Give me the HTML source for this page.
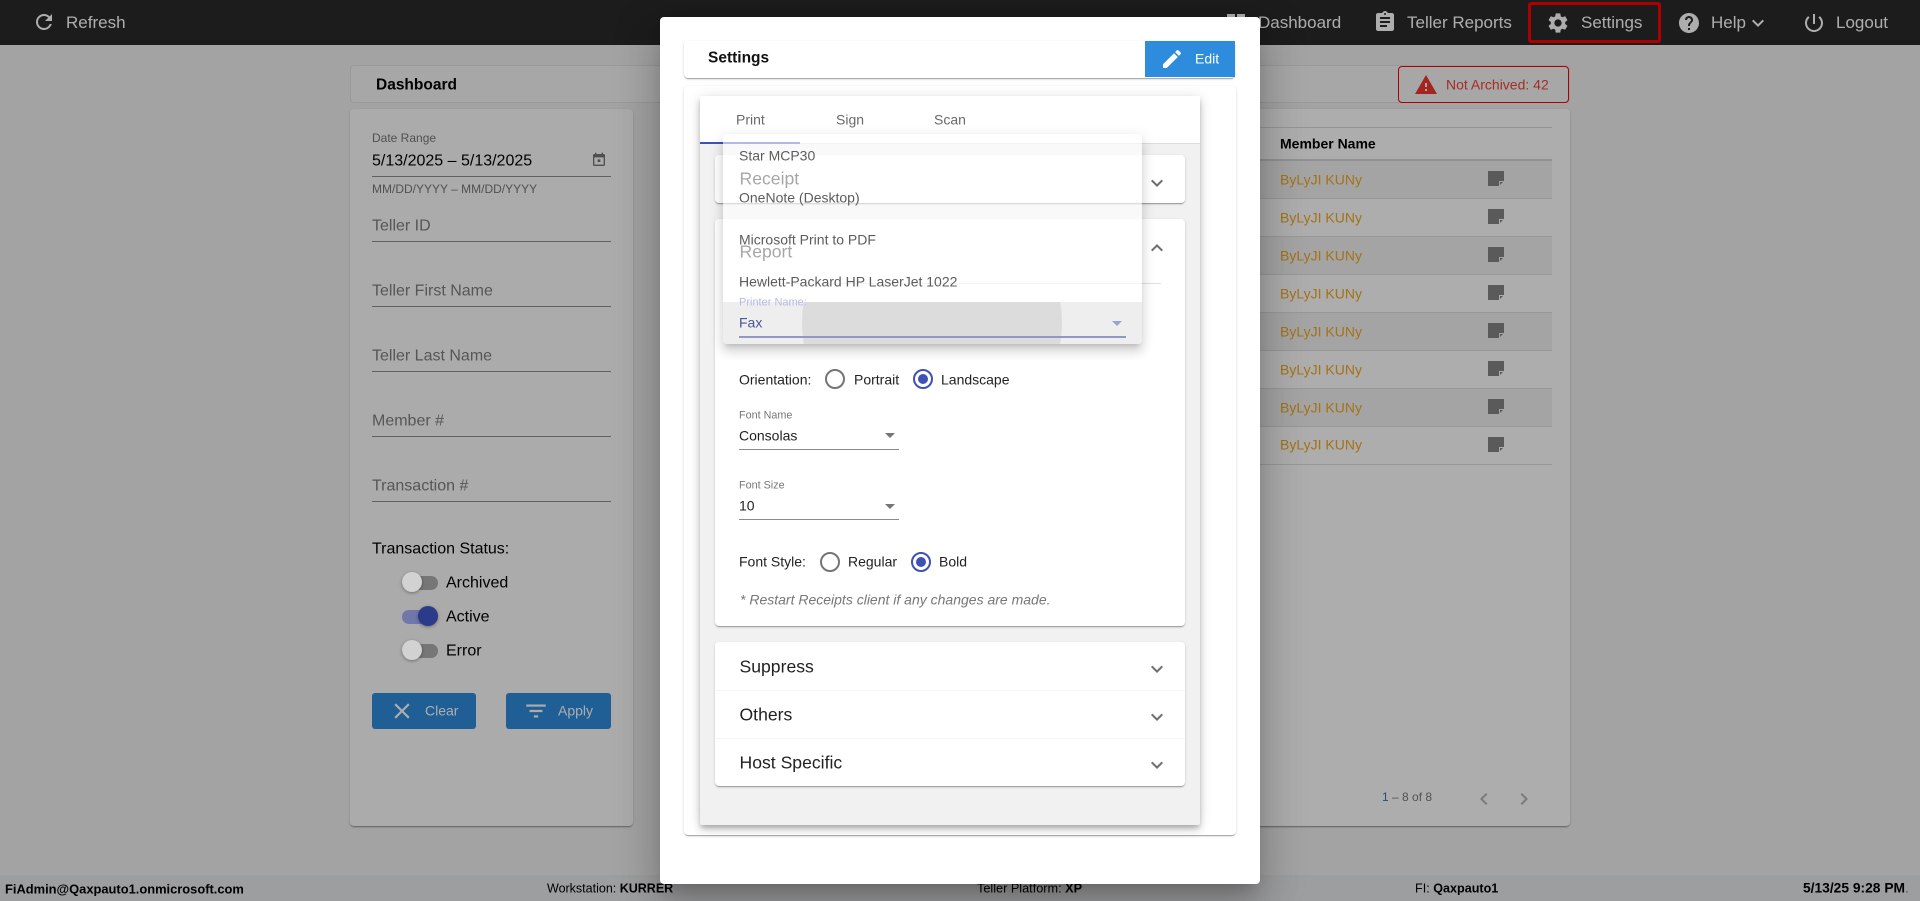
<!DOCTYPE html>
<html><head><meta charset="utf-8"><title>Settings</title>
<style>
html,body{margin:0;padding:0;width:1920px;height:901px;overflow:hidden;background:#f0f0f0;font-family:"Liberation Sans",Arial,sans-serif;color:#000}
.a{position:absolute}
.t{position:absolute;white-space:nowrap;transform:translateY(-50%);line-height:1.2}
svg{position:absolute;display:block}
.card{position:absolute;background:#fff;border-radius:4px;box-shadow:0 2px 1px -1px rgba(0,0,0,.2),0 1px 1px rgba(0,0,0,.14),0 1px 3px rgba(0,0,0,.12)}
.ln{position:absolute;height:1px;background:#8f8f8f}
.g{color:#7f7f7f;font-size:16px}
.nav{color:#fff;font-size:17px}
.row{position:absolute;left:670px;width:882px;height:38px;border-bottom:1px solid #e0e0e0;box-sizing:border-box}
.nm{color:#f2a922;font-size:14px}
.opt{color:#5c5c5c;font-size:14px;left:739px}
.hd{font-size:17.6px;color:#222;left:739.5px}
.b14{font-size:14px;color:#222}
.lab{font-size:12px;color:#777}
</style></head><body>

<!-- top bar -->
<div class="a" style="left:0;top:0;width:1920px;height:45px;background:#2a2a2a"></div>
<svg style="left:32px;top:10px" width="24" height="24" viewBox="0 0 24 24" fill="#fff"><path d="M17.65 6.35C16.2 4.9 14.21 4 12 4c-4.42 0-7.99 3.58-7.99 8s3.57 8 7.99 8c3.73 0 6.84-2.55 7.73-6h-2.08c-.82 2.33-3.04 4-5.65 4-3.31 0-6-2.69-6-6s2.69-6 6-6c1.66 0 3.14.69 4.22 1.78L13 11h7V4l-2.35 2.35z"/></svg>
<div class="t nav" style="left:66px;top:23px">Refresh</div>
<svg style="left:1224px;top:11px" width="24" height="24" viewBox="0 0 24 24" fill="#fff"><path d="M3 13h8V3H3v10zm0 8h8v-6H3v6zm10 0h8V11h-8v10zm0-18v6h8V3h-8z"/></svg>
<div class="t nav" style="left:1258px;top:23px">Dashboard</div>
<svg style="left:1373px;top:10px" width="24" height="24" viewBox="0 0 24 24" fill="#fff"><path d="M19 3h-4.18C14.4 1.84 13.3 1 12 1c-1.3 0-2.4.84-2.82 2H5c-1.1 0-2 .9-2 2v14c0 1.1.9 2 2 2h14c1.1 0 2-.9 2-2V5c0-1.1-.9-2-2-2zm-7 0c.55 0 1 .45 1 1s-.45 1-1 1-1-.45-1-1 .45-1 1-1zm2 14H7v-2h7v2zm3-4H7v-2h10v2zm0-4H7V7h10v2z"/></svg>
<div class="t nav" style="left:1407px;top:23px">Teller Reports</div>
<div class="a" style="left:1528px;top:2px;width:133px;height:41px;box-sizing:border-box;border:3px solid #f00;border-radius:3px"></div>
<svg style="left:1546px;top:11px" width="24" height="24" viewBox="0 0 24 24" fill="#fff"><path d="M19.14 12.94c.04-.3.06-.61.06-.94 0-.32-.02-.64-.07-.94l2.03-1.58c.18-.14.23-.41.12-.61l-1.92-3.32c-.12-.22-.37-.29-.59-.22l-2.39.96c-.5-.38-1.03-.7-1.62-.94l-.36-2.54c-.04-.24-.24-.41-.48-.41h-3.84c-.24 0-.43.17-.47.41l-.36 2.54c-.59.24-1.13.57-1.62.94l-2.39-.96c-.22-.08-.47 0-.59.22L2.74 8.87c-.12.21-.08.47.12.61l2.03 1.58c-.05.3-.09.63-.09.94s.02.64.07.94l-2.03 1.58c-.18.14-.23.41-.12.61l1.92 3.32c.12.22.37.29.59.22l2.39-.96c.5.38 1.03.7 1.62.94l.36 2.54c.05.24.24.41.48.41h3.84c.24 0 .44-.17.47-.41l.36-2.54c.59-.24 1.13-.56 1.62-.94l2.39.96c.22.08.47 0 .59-.22l1.92-3.32c.12-.22.07-.47-.12-.61l-2.01-1.58zM12 15.6c-1.98 0-3.6-1.62-3.6-3.6s1.62-3.6 3.6-3.6 3.6 1.62 3.6 3.6-1.62 3.6-3.6 3.6z"/></svg>
<div class="t nav" style="left:1581px;top:23px">Settings</div>
<svg style="left:1677px;top:11px" width="24" height="24" viewBox="0 0 24 24" fill="#fff"><path d="M12 2C6.48 2 2 6.48 2 12s4.48 10 10 10 10-4.48 10-10S17.52 2 12 2zm1 17h-2v-2h2v2zm2.07-7.75l-.9.92C13.45 12.9 13 13.5 13 15h-2v-.5c0-1.1.45-2.1 1.17-2.83l1.24-1.26c.37-.36.59-.86.59-1.41 0-1.1-.9-2-2-2s-2 .9-2 2H8c0-2.21 1.79-4 4-4s4 1.79 4 4c0 .88-.36 1.68-.93 2.25z"/></svg>
<div class="t nav" style="left:1711px;top:23px">Help</div>
<svg style="left:1746px;top:11px" width="24" height="24" viewBox="0 0 24 24" fill="#fff"><path d="M16.59 8.59L12 13.17 7.41 8.59 6 10l6 6 6-6z"/></svg>
<svg style="left:1802px;top:11px" width="24" height="24" viewBox="0 0 24 24" fill="#fff"><path d="M13 3h-2v10h2V3zm4.83 2.17l-1.42 1.42C17.99 7.86 19 9.81 19 12c0 3.87-3.13 7-7 7s-7-3.13-7-7c0-2.19 1.01-4.14 2.58-5.42L6.17 5.17C4.23 6.82 3 9.26 3 12c0 4.97 4.03 9 9 9s9-4.03 9-9c0-2.74-1.23-5.18-3.17-6.83z"/></svg>
<div class="t nav" style="left:1836px;top:23px">Logout</div>

<!-- page header -->
<div class="a" style="left:350px;top:65px;width:1220px;height:38px;background:#f6f6f6;border:1px solid #e2e2e2;box-sizing:border-box;border-radius:4px"></div>
<div class="t" style="left:376px;top:86px;font-size:15.5px;font-weight:bold">Dashboard</div>
<div class="a" style="left:1398px;top:66px;width:171px;height:37px;box-sizing:border-box;border:1px solid #f00;border-radius:4px;background:#f6f6f6"></div>
<svg style="left:1414px;top:73px" width="24" height="24" viewBox="0 0 24 24" fill="#f2352f"><path d="M1 21h22L12 2 1 21zm12-3h-2v-2h2v2zm0-4h-2v-4h2v4z"/></svg>
<div class="t" style="left:1446px;top:85px;font-size:14px;color:#f44336">Not Archived: 42</div>

<!-- filter panel -->
<div class="card" style="left:350px;top:109px;width:283px;height:717px;background:#fdfdfd"></div>
<div class="t lab" style="left:372px;top:138px">Date Range</div>
<div class="t" style="left:372px;top:161px;font-size:16px">5/13/2025 – 5/13/2025</div>
<svg style="left:591px;top:152px" width="16" height="16" viewBox="0 0 24 24" fill="#757575"><path d="M19 3h-1V1h-2v2H8V1H6v2H5c-1.11 0-2 .9-2 2v14c0 1.1.89 2 2 2h14c1.1 0 2-.9 2-2V5c0-1.1-.9-2-2-2zm0 16H5V8h14v11zM10 11h4v4h-4z"/></svg>
<div class="ln" style="left:372px;top:176px;width:239px"></div>
<div class="t lab" style="left:372px;top:189px">MM/DD/YYYY – MM/DD/YYYY</div>
<div class="t g" style="left:372px;top:226px">Teller ID</div><div class="ln" style="left:372px;top:241px;width:239px"></div>
<div class="t g" style="left:372px;top:291px">Teller First Name</div><div class="ln" style="left:372px;top:306px;width:239px"></div>
<div class="t g" style="left:372px;top:356px">Teller Last Name</div><div class="ln" style="left:372px;top:371px;width:239px"></div>
<div class="t g" style="left:372px;top:421px">Member #</div><div class="ln" style="left:372px;top:436px;width:239px"></div>
<div class="t g" style="left:372px;top:486px">Transaction #</div><div class="ln" style="left:372px;top:501px;width:239px"></div>
<div class="t" style="left:372px;top:549px;font-size:16px">Transaction Status:</div>

<div class="t" style="left:446px;top:583px;font-size:16px">Archived</div>
<div class="t" style="left:446px;top:617px;font-size:16px">Active</div>
<div class="t" style="left:446px;top:651px;font-size:16px">Error</div>

<div class="a" style="left:372px;top:693px;width:104px;height:36px;background:#2e8cdc;border-radius:3px"></div>
<svg style="left:389px;top:698px" width="26" height="26" viewBox="0 0 24 24" fill="#fff"><path d="M19 6.41L17.59 5 12 10.59 6.41 5 5 6.41 10.59 12 5 17.59 6.41 19 12 13.41 17.59 19 19 17.59 13.41 12z"/></svg>
<div class="t" style="left:425px;top:711px;font-size:14px;color:#fff">Clear</div>
<div class="a" style="left:506px;top:693px;width:105px;height:36px;background:#2e8cdc;border-radius:3px"></div>
<svg style="left:523px;top:698px" width="26" height="26" viewBox="0 0 24 24" fill="#fff"><path d="M10 18h4v-2h-4v2zM3 6v2h18V6H3zm3 7h12v-2H6v2z"/></svg>
<div class="t" style="left:558px;top:711px;font-size:14px;color:#fff">Apply</div>

<!-- table panel -->
<div class="card" style="left:670px;top:109px;width:900px;height:717px;background:#fff"></div>
<div class="a" style="left:670px;top:127px;width:882px;height:1px;background:#ddd"></div>
<div class="t" style="left:1280px;top:144px;font-size:14px;font-weight:bold">Member Name</div>
<div class="a" style="left:670px;top:159px;width:882px;height:2px;background:#d4d6d8"></div>
<div class="row" style="top:161px;background:#f2f2f2"></div>
<div class="row" style="top:199px"></div>
<div class="row" style="top:237px;background:#f2f2f2"></div>
<div class="row" style="top:275px"></div>
<div class="row" style="top:313px;background:#f2f2f2"></div>
<div class="row" style="top:351px"></div>
<div class="row" style="top:389px;background:#f2f2f2"></div>
<div class="row" style="top:427px"></div>

<div class="t nm" style="left:1280px;top:180px">ByLyJI KUNy</div>
<div class="t nm" style="left:1280px;top:218px">ByLyJI KUNy</div>
<div class="t nm" style="left:1280px;top:256px">ByLyJI KUNy</div>
<div class="t nm" style="left:1280px;top:294px">ByLyJI KUNy</div>
<div class="t nm" style="left:1280px;top:332px">ByLyJI KUNy</div>
<div class="t nm" style="left:1280px;top:370px">ByLyJI KUNy</div>
<div class="t nm" style="left:1280px;top:408px">ByLyJI KUNy</div>
<div class="t nm" style="left:1280px;top:445px">ByLyJI KUNy</div>

<svg style="left:1488px;top:171px" width="16" height="15" viewBox="0 0 16 15"><path fill="#858585" d="M0 0h16v10h-5v5H0z"/><path fill="#858585" d="M12 11h3l-3 3z"/></svg>
<svg style="left:1488px;top:209px" width="16" height="15" viewBox="0 0 16 15"><path fill="#858585" d="M0 0h16v10h-5v5H0z"/><path fill="#858585" d="M12 11h3l-3 3z"/></svg>
<svg style="left:1488px;top:247px" width="16" height="15" viewBox="0 0 16 15"><path fill="#858585" d="M0 0h16v10h-5v5H0z"/><path fill="#858585" d="M12 11h3l-3 3z"/></svg>
<svg style="left:1488px;top:285px" width="16" height="15" viewBox="0 0 16 15"><path fill="#858585" d="M0 0h16v10h-5v5H0z"/><path fill="#858585" d="M12 11h3l-3 3z"/></svg>
<svg style="left:1488px;top:323px" width="16" height="15" viewBox="0 0 16 15"><path fill="#858585" d="M0 0h16v10h-5v5H0z"/><path fill="#858585" d="M12 11h3l-3 3z"/></svg>
<svg style="left:1488px;top:361px" width="16" height="15" viewBox="0 0 16 15"><path fill="#858585" d="M0 0h16v10h-5v5H0z"/><path fill="#858585" d="M12 11h3l-3 3z"/></svg>
<svg style="left:1488px;top:399px" width="16" height="15" viewBox="0 0 16 15"><path fill="#858585" d="M0 0h16v10h-5v5H0z"/><path fill="#858585" d="M12 11h3l-3 3z"/></svg>
<svg style="left:1488px;top:437px" width="16" height="15" viewBox="0 0 16 15"><path fill="#858585" d="M0 0h16v10h-5v5H0z"/><path fill="#858585" d="M12 11h3l-3 3z"/></svg>

<div class="t" style="left:1382px;top:797px;font-size:12px;color:#7a7a7a"><span style="color:#3f6fb5">1</span> – 8 of 8</div>
<svg style="left:1472px;top:787px" width="24" height="24" viewBox="0 0 24 24" fill="#b5b5b5"><path d="M15.41 7.41L14 6l-6 6 6 6 1.41-1.41L10.83 12z"/></svg>
<svg style="left:1512px;top:787px" width="24" height="24" viewBox="0 0 24 24" fill="#b5b5b5"><path d="M10 6L8.59 7.41 13.17 12l-4.58 4.59L10 18l6-6z"/></svg>

<!-- footer -->
<div class="a" style="left:0;top:875px;width:1920px;height:26px;background:#e7e9ea"></div>
<div class="t" style="left:5px;top:889px;font-size:12.9px;font-weight:bold">FiAdmin@Qaxpauto1.onmicrosoft.com</div>
<div class="t" style="left:547px;top:889px;font-size:12.5px">Workstation: <b>KURRER</b></div>
<div class="t" style="left:977px;top:889px;font-size:12.7px">Teller Platform: <b>XP</b></div>
<div class="t" style="left:1415px;top:889px;font-size:12.6px">FI: <b>Qaxpauto1</b></div>
<div class="t" style="left:1803px;top:889px;font-size:13.8px;font-weight:bold">5/13/25 9:28 PM<span style="font-weight:normal;color:#888">.</span></div>

<!-- backdrop -->
<div class="a" style="left:0;top:0;width:1920px;height:901px;background:rgba(0,0,0,.32)"></div>

<!-- toggles (final colours, drawn above the backdrop) -->
<div class="a" style="left:402px;top:576px;width:36px;height:14px;border-radius:7px;background:#767676"></div>
<div class="a" style="left:402px;top:572px;width:20px;height:20px;border-radius:50%;background:#d2d2d2;box-shadow:0 1px 3px rgba(0,0,0,.35)"></div>
<div class="a" style="left:402px;top:610px;width:36px;height:14px;border-radius:7px;background:#6f78a8"></div>
<div class="a" style="left:418px;top:606px;width:20px;height:20px;border-radius:50%;background:#2c3a8a;box-shadow:0 1px 3px rgba(0,0,0,.35)"></div>
<div class="a" style="left:402px;top:644px;width:36px;height:14px;border-radius:7px;background:#767676"></div>
<div class="a" style="left:402px;top:640px;width:20px;height:20px;border-radius:50%;background:#d2d2d2;box-shadow:0 1px 3px rgba(0,0,0,.35)"></div>

<!-- modal -->
<div class="a" style="left:660px;top:17px;width:600px;height:867px;background:#fff;border-radius:4px;box-shadow:0 11px 15px -7px rgba(0,0,0,.2),0 24px 38px 3px rgba(0,0,0,.14),0 9px 46px 8px rgba(0,0,0,.12)"></div>

<div class="card" style="left:684px;top:41px;width:551px;height:37px"></div>
<div class="t" style="left:708px;top:59px;font-size:15.5px;font-weight:bold;color:#111">Settings</div>
<div class="a" style="left:1145px;top:41px;width:90px;height:36px;background:#2e8cdc"></div>
<svg style="left:1160px;top:47px" width="24" height="24" viewBox="0 0 24 24" fill="#fff"><path d="M3 17.25V21h3.75L17.81 9.94l-3.75-3.75L3 17.25zM20.71 7.04c.39-.39.39-1.02 0-1.41l-2.34-2.34c-.39-.39-1.02-.39-1.41 0l-1.83 1.83 3.75 3.75 1.83-1.83z"/></svg>
<div class="t" style="left:1195px;top:59px;font-size:14px;color:#fff">Edit</div>

<div class="card" style="left:684px;top:86px;width:552px;height:749px"></div>
<div class="a" style="left:700px;top:96px;width:500px;height:729px;background:#f1f1f1;border-radius:2px;box-shadow:0 3px 5px -1px rgba(0,0,0,.2),0 5px 8px rgba(0,0,0,.14),0 1px 14px rgba(0,0,0,.12)"></div>
<div class="a" style="left:700px;top:96px;width:500px;height:48px;background:#fff;border-bottom:1px solid #dcdcdc;box-sizing:border-box"></div>
<div class="t" style="left:736px;top:120px;font-size:14px;color:#6a6a6a">Print</div>
<div class="t" style="left:836px;top:120px;font-size:14px;color:#6a6a6a">Sign</div>
<div class="t" style="left:934px;top:120px;font-size:14px;color:#6a6a6a">Scan</div>
<div class="a" style="left:700px;top:142px;width:100px;height:2px;background:#3f51b5"></div>

<!-- receipt -->
<div class="card" style="left:715px;top:155px;width:470px;height:48px"></div>
<div class="t hd" style="top:179px">Receipt</div>
<svg style="left:1145px;top:171px" width="24" height="24" viewBox="0 0 24 24" fill="#6e6e6e"><path d="M16.59 8.59L12 13.17 7.41 8.59 6 10l6 6 6-6z"/></svg>

<!-- report -->
<div class="card" style="left:715px;top:219px;width:470px;height:407px"></div>
<div class="t hd" style="top:252px">Report</div>
<svg style="left:1145px;top:236px" width="24" height="24" viewBox="0 0 24 24" fill="#6e6e6e"><path d="M12 8l-6 6 1.41 1.41L12 10.83l4.59 4.58L18 14z"/></svg>
<div class="a" style="left:739px;top:283px;width:422px;height:1px;background:#e0e0e0"></div>

<div class="t b14" style="left:739px;top:380px">Orientation:</div>
<div class="a" style="left:825px;top:369px;width:20px;height:20px;border:2px solid #757575;border-radius:50%;box-sizing:border-box"></div>
<div class="t b14" style="left:854px;top:380px">Portrait</div>
<div class="a" style="left:913px;top:369px;width:20px;height:20px;border:2px solid #3f51b5;border-radius:50%;box-sizing:border-box"></div>
<div class="a" style="left:918px;top:374px;width:10px;height:10px;background:#3f51b5;border-radius:50%"></div>
<div class="t b14" style="left:941px;top:380px">Landscape</div>

<div class="t lab" style="left:739px;top:416px;font-size:10.8px">Font Name</div>
<div class="t b14" style="left:739px;top:436px">Consolas</div>
<svg style="left:885px;top:433px" width="10" height="5" viewBox="0 0 10 5" fill="#757575"><path d="M0 0h10L5 5z"/></svg>
<div class="a" style="left:739px;top:449px;width:160px;height:1px;background:#8a8a8a"></div>

<div class="t lab" style="left:739px;top:486px;font-size:10.8px">Font Size</div>
<div class="t b14" style="left:739px;top:506px">10</div>
<svg style="left:885px;top:504px" width="10" height="5" viewBox="0 0 10 5" fill="#757575"><path d="M0 0h10L5 5z"/></svg>
<div class="a" style="left:739px;top:519px;width:160px;height:1px;background:#8a8a8a"></div>

<div class="t b14" style="left:739px;top:562px">Font Style:</div>
<div class="a" style="left:820px;top:552px;width:20px;height:20px;border:2px solid #757575;border-radius:50%;box-sizing:border-box"></div>
<div class="t b14" style="left:848px;top:562px">Regular</div>
<div class="a" style="left:911px;top:552px;width:20px;height:20px;border:2px solid #3f51b5;border-radius:50%;box-sizing:border-box"></div>
<div class="a" style="left:916px;top:557px;width:10px;height:10px;background:#3f51b5;border-radius:50%"></div>
<div class="t b14" style="left:939px;top:562px">Bold</div>
<div class="t" style="left:740px;top:600px;font-size:14px;font-style:italic;color:#777">* Restart Receipts client if any changes are made.</div>

<!-- others -->
<div class="card" style="left:715px;top:642px;width:470px;height:144px"></div>
<div class="a" style="left:715px;top:690px;width:470px;height:1px;background:#f5f5f5"></div>
<div class="a" style="left:715px;top:738px;width:470px;height:1px;background:#f5f5f5"></div>
<div class="t hd" style="top:667px">Suppress</div>
<div class="t hd" style="top:715px">Others</div>
<div class="t hd" style="top:763px">Host Specific</div>
<svg style="left:1145px;top:657px" width="24" height="24" viewBox="0 0 24 24" fill="#6e6e6e"><path d="M16.59 8.59L12 13.17 7.41 8.59 6 10l6 6 6-6z"/></svg>
<svg style="left:1145px;top:705px" width="24" height="24" viewBox="0 0 24 24" fill="#6e6e6e"><path d="M16.59 8.59L12 13.17 7.41 8.59 6 10l6 6 6-6z"/></svg>
<svg style="left:1145px;top:753px" width="24" height="24" viewBox="0 0 24 24" fill="#6e6e6e"><path d="M16.59 8.59L12 13.17 7.41 8.59 6 10l6 6 6-6z"/></svg>

<!-- dropdown fading in -->
<div class="a" style="left:723px;top:134px;width:419px;height:210px;background:rgba(255,255,255,.6);border-radius:4px;box-shadow:0 5px 5px -3px rgba(0,0,0,.14),0 8px 10px 1px rgba(0,0,0,.1),0 3px 14px 2px rgba(0,0,0,.08)"></div>
<div class="a" style="left:723px;top:302px;width:419px;height:42px;background:#eee;border-radius:0 0 4px 4px;overflow:hidden">
  <div class="a" style="left:79px;top:-109px;width:260px;height:260px;border-radius:50%;background:#dcdcdc"></div>
</div>
<div class="t opt" style="top:156px">Star MCP30</div>
<div class="t opt" style="top:198px">OneNote (Desktop)</div>
<div class="t opt" style="top:240px">Microsoft Print to PDF</div>
<div class="t opt" style="top:282px">Hewlett-Packard HP LaserJet 1022</div>
<div class="t" style="left:739px;top:303px;font-size:11px;color:#b4bae3">Printer Name:</div>
<div class="t" style="left:739px;top:323px;font-size:14px;color:#4a5699">Fax</div>
<svg style="left:1112px;top:321px" width="10" height="5" viewBox="0 0 10 5" fill="#9aa3d6"><path d="M0 0h10L5 5z"/></svg>
<div class="a" style="left:739px;top:336px;width:387px;height:2px;background:#9198c6"></div>

</body></html>
